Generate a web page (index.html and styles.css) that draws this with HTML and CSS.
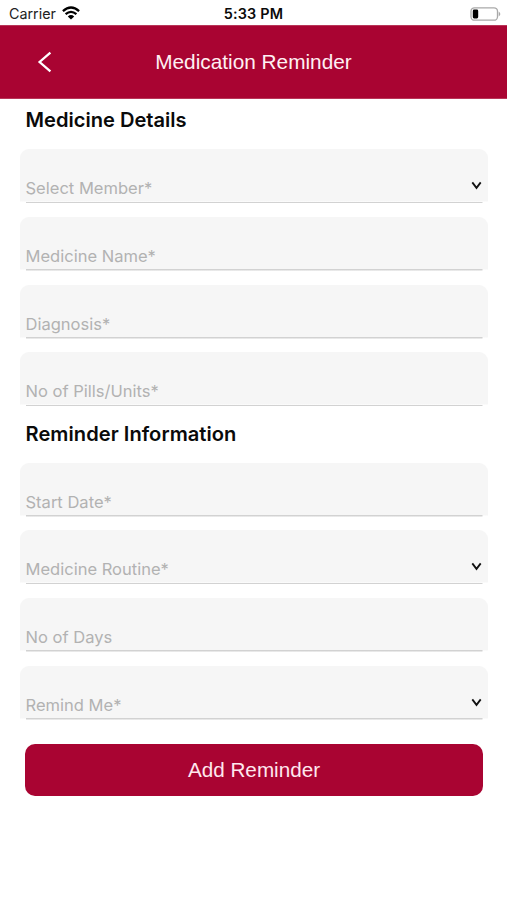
FILE: index.html
```html
<!DOCTYPE html>
<html lang="en">
<head>
<meta charset="utf-8">
<title>Medication Reminder</title>
<link rel="stylesheet" href="styles.css">
</head>
<body>
<div class="status">
  <div class="carrier"><span>Carrier</span>
    <svg class="wifi" width="18" height="14" viewBox="0 0 18 14"><path d="M9 13.6 5.8 10.4Q9 7.8 12.2 10.4Z" fill="#000"/><path d="M.9 5.1Q9-2 17.1 5.1M3.6 8.2Q9 3.6 14.4 8.2" fill="none" stroke="#000" stroke-width="2.3"/></svg>
  </div>
  <div class="time">5:33 PM</div>
  <svg class="battery" width="31" height="14" viewBox="0 0 31 14"><rect x="1" y=".8" width="26.5" height="12.4" rx="3.5" fill="#fff" stroke="#a9a9a9" stroke-width="1.3"/><rect x="2.8" y="2.6" width="5.4" height="8.8" rx="1.4" fill="#000"/><path d="M28.7 4.5Q32 7 28.7 9.5Z" fill="#a9a9a9"/></svg>
</div>
<header class="bar">
  <svg class="back" width="16" height="22" viewBox="0 0 16 22"><path d="M14.4 1.6 3.6 11 14.4 20.4" fill="none" stroke="#fff" stroke-width="2.3"/></svg>
  <h1>Medication Reminder</h1>
</header>
<main>
  <h2 class="details">Medicine Details</h2>
  <div class="fields">
    <div class="field"><span>Select Member*</span><svg class="chev" width="12" height="9" viewBox="0 0 12 9"><path d="M2.3 1.4 6.5 6.9 10.7 1.4" fill="none" stroke="#111" stroke-width="1.8"/></svg></div>
    <div class="field"><span>Medicine Name*</span></div>
    <div class="field"><span>Diagnosis*</span></div>
    <div class="field"><span>No of Pills/Units*</span></div>
  </div>
  <h2 class="info">Reminder Information</h2>
  <div class="fields">
    <div class="field"><span>Start Date*</span></div>
    <div class="field"><span>Medicine Routine*</span><svg class="chev" width="12" height="9" viewBox="0 0 12 9"><path d="M2.3 1.4 6.5 6.9 10.7 1.4" fill="none" stroke="#111" stroke-width="1.8"/></svg></div>
    <div class="field"><span>No of Days</span></div>
    <div class="field"><span>Remind Me*</span><svg class="chev" width="12" height="9" viewBox="0 0 12 9"><path d="M2.3 1.4 6.5 6.9 10.7 1.4" fill="none" stroke="#111" stroke-width="1.8"/></svg></div>
  </div>
  <button class="add">Add Reminder</button>
</main>
</body>
</html>
```
FILE: styles.css
```css
* { box-sizing: border-box; }
body { margin: 0; min-height: 900px; background: #fff; color: #0a0a0a; font-family: Inter, "Liberation Sans", sans-serif; }
.status { display: grid; grid-template-columns: 1fr auto 1fr; align-items: center; height: 25px; padding: 2px 6px 0 9px; }
.carrier { display: flex; align-items: center; gap: 6px; font-size: 14.3px; line-height: 18px; color: #222; }
.wifi { margin-top: -2px; }
.time { font-size: 14.4px; line-height: 18px; font-weight: 600; letter-spacing: .2px; margin-left: -3px; }
.battery { justify-self: end; }
.bar { display: grid; grid-template-columns: 60px 1fr 60px; align-items: center; height: 73.5px; background: #a90432; border-top: 1px solid #b83658; border-bottom: 1px solid #b83658; }
.back { margin-left: 36px; }
h1 { margin: 0; text-align: center; font: 400 20.8px/24px "Liberation Sans", sans-serif; color: #fff0f3; }
main { padding: 0 19px 0 20px; }
h2 { margin: 0; padding-left: 5.5px; font-size: 20.1px; font-weight: 600; line-height: 24px; }
.details { padding-top: 9.5px; height: 50.9px; }
.info { padding-top: 15.8px; height: 56.6px; letter-spacing: .05px; }
.fields { display: grid; gap: 13.6px; }
.field { display: flex; justify-content: space-between; align-items: flex-end; height: 54px; padding: 0 6px 5px 5.5px; border-radius: 9px 9px 0 0; background: linear-gradient(#d2d2d2, #d2d2d2) 5.5px 100% / calc(100% - 11.5px) 1.5px no-repeat, linear-gradient(#f6f6f6, #f6f6f6) 0 0 / 100% calc(100% - 1.5px) no-repeat; color: #b2b2b2; font-size: 16.55px; line-height: 20px; }
.chev { margin-bottom: 8px; }
.add { display: block; width: 458px; height: 52px; margin: 24px 0 0 5px; padding: 0; border: 0; border-radius: 10px; background: #a90432; color: #ffe8ee; font: 400 20.7px/52px "Liberation Sans", sans-serif; }
```
